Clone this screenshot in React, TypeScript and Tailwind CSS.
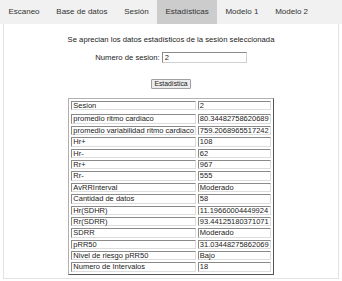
import React from "react";

const rows: [string, string][] = [
  ["promedio ritmo cardiaco", "80.34482758620689"],
  ["promedio variabilidad ritmo cardiaco", "759.2068965517242"],
  ["Hr+", "108"],
  ["Hr-", "62"],
  ["Rr+", "967"],
  ["Rr-", "555"],
  ["AvRRInterval", "Moderado"],
  ["Cantidad de datos", "58"],
  ["Hr(SDHR)", "11.19660004449924"],
  ["Rr(SDRR)", "93.44125180371071"],
  ["SDRR", "Moderado"],
  ["pRR50", "31.03448275862069"],
  ["Nivel de riesgo pRR50", "Bajo"],
  ["Numero de Intervalos", "18"],
];

const tabs = ["Escaneo", "Base de datos", "Sesión", "Estadísticas", "Modelo 1", "Modelo 2"];

const cell =
  "border border-t-[#8a8a8a] border-l-[#8a8a8a] border-r-[#dcdcdc] border-b-[#dcdcdc] px-[1px] py-0 whitespace-nowrap text-left align-middle";

function Cell({ children }: { children: React.ReactNode }) {
  return (
    <td className={cell}>
      <div className="h-[7.4px] leading-[7.4px] flex items-center">{children}</div>
    </td>
  );
}

export default function App() {
  return (
    <div
      className="w-[342px] h-[281px] bg-white text-[#222] overflow-hidden"
      style={{ fontFamily: '"Liberation Sans", Arial, sans-serif' }}
    >
      <div className="flex h-[24px] bg-[#f1f1f1] text-[8px] text-[#333]">
        {tabs.map((t) => (
          <div
            key={t}
            className={
              "flex items-center px-[8.4px] " + (t === "Estadísticas" ? "bg-[#cccccc]" : "")
            }
          >
            {t}
          </div>
        ))}
      </div>
      <div className="mx-[3px] h-[255px] border border-t-0 border-[#e2e2e2] flex flex-col items-center pt-[11px]">
        <div className="text-[7.7px] leading-[10px]">
          Se aprecian los datos estadísticos de la sesión seleccionada
        </div>
        <div className="mt-[7px] flex items-center text-[7.7px] h-[11px]">
          <span className="mr-[2px]">Numero de sesion:</span>
          <div className="w-[85px] h-[11px] border border-t-[#8a8a8a] border-l-[#8a8a8a] border-r-[#d0d0d0] border-b-[#d0d0d0] bg-white pl-[2px] leading-[9px] text-[7.5px]">
            2
          </div>
        </div>
        <div className="mt-[16px] w-[40px] h-[10px] bg-[#ececec] border border-[#a0a0a0] rounded-[1px] text-[6.8px] leading-[8px] flex items-center justify-center">
          Estadística
        </div>
        <table className="mt-[9px] border-separate border-spacing-[2px] border border-t-[#b0b0b0] border-l-[#b0b0b0] border-r-[#555] border-b-[#555] text-[7.5px]">
          <tbody>
            <tr>
              <Cell>Sesion</Cell>
              <Cell>2</Cell>
            </tr>
            <tr>
              <td colSpan={2} className="p-0 h-0 border-0"></td>
            </tr>
            {rows.map(([k, v]) => (
              <tr key={k}>
                <Cell>{k}</Cell>
                <Cell>{v}</Cell>
              </tr>
            ))}
          </tbody>
        </table>
      </div>
    </div>
  );
}
